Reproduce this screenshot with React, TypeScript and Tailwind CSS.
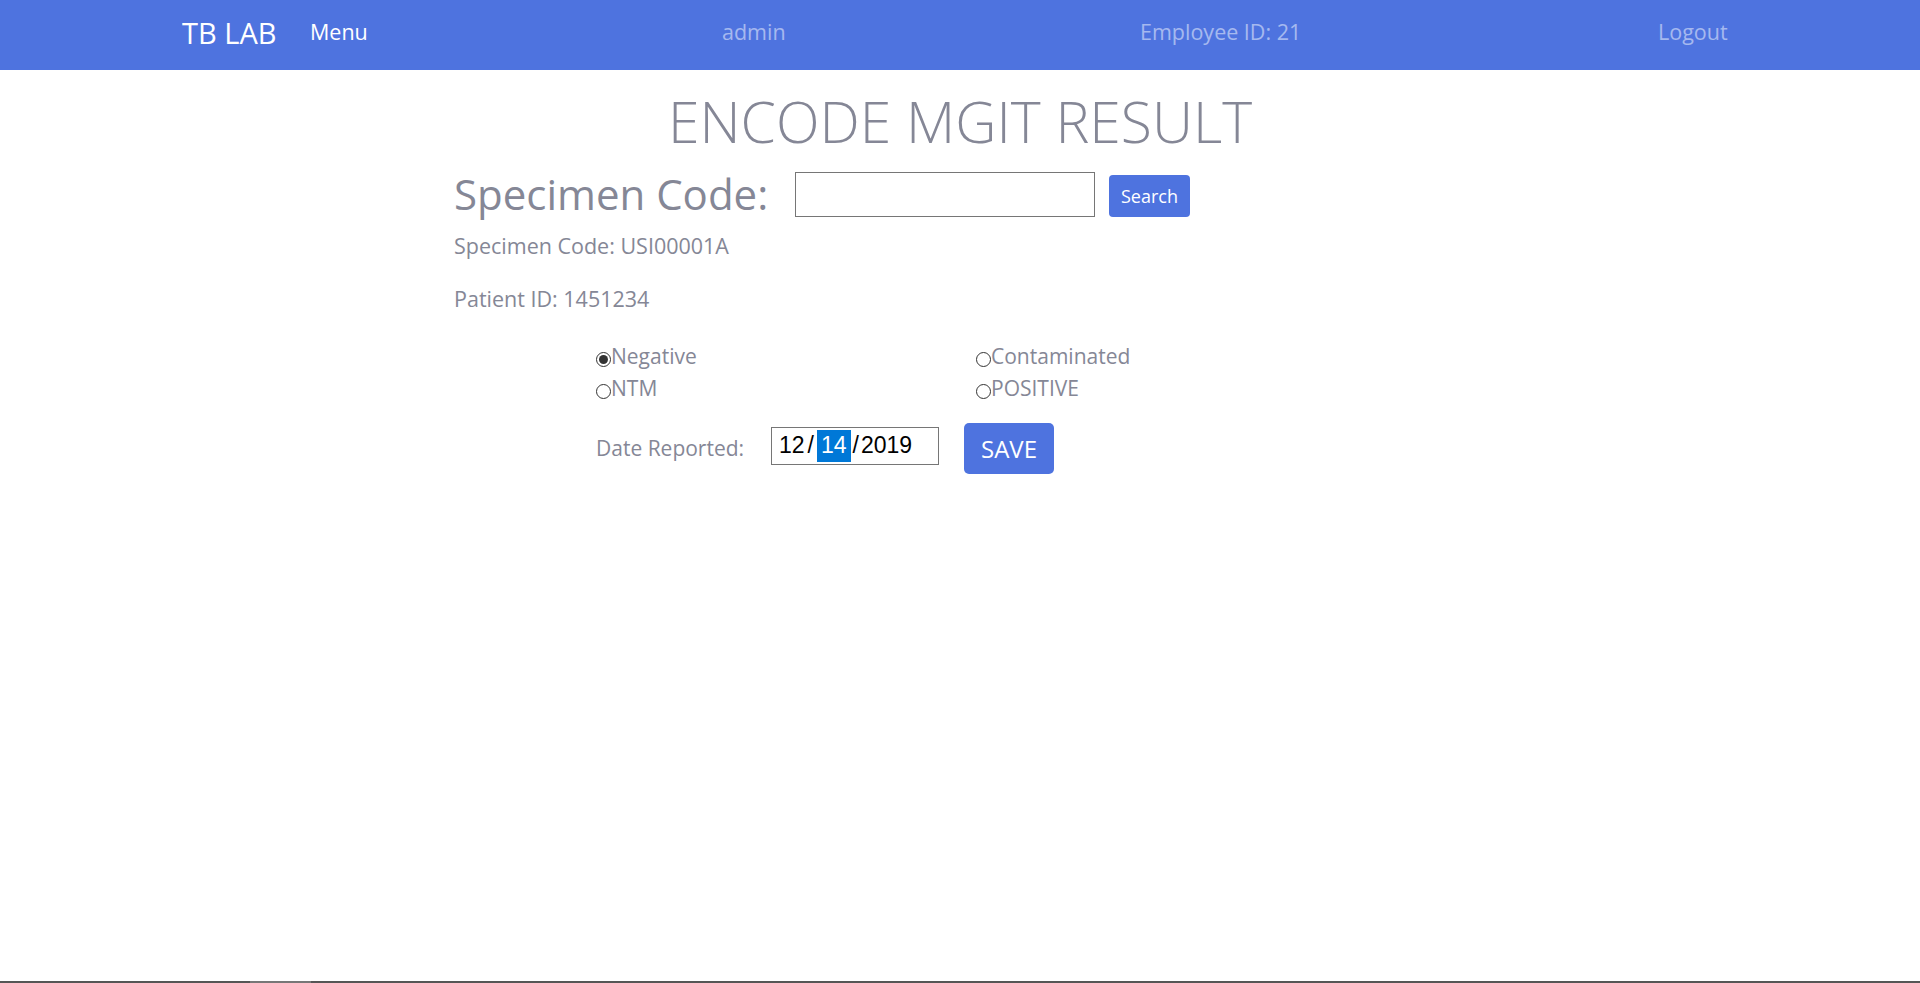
export default function App() {
  return (
    <div className="min-h-screen bg-white font-['Open_Sans','Noto_Sans',sans-serif] text-[#858796]">
      {/* top bar */}
      <nav className="flex h-[70px] items-center bg-[#4e73df] pb-[6px] pl-[182px]">
        <div className="w-[128px] text-[29px] leading-none text-white">TB LAB</div>
        <div className="w-[412px] text-[21.5px] leading-none text-white">Menu</div>
        <div className="w-[418px] text-[21.5px] leading-none text-white/50">admin</div>
        <div className="w-[518px] text-[21.5px] leading-none text-white/50">Employee ID: 21</div>
        <div className="text-[21.5px] leading-none text-white/50">Logout</div>
      </nav>

      <main>
        <h1 className="mt-[15px] text-center text-[57px] font-light leading-[72px]">ENCODE MGIT RESULT</h1>

        <section className="pl-[454px]">
          <div className="mt-[12px] flex items-center">
            <h2 className="w-[341px] text-[42px] leading-[50px]">Specimen Code:</h2>
            <input
              type="text"
              className="h-[45px] w-[300px] border border-[#767676] bg-white px-2 outline-none"
            />
            <button className="ml-[14px] mt-[4px] h-[42px] w-[81px] rounded-[4px] bg-[#4e73df] text-[18px] text-white">
              Search
            </button>
          </div>

          <p className="mt-[12px] text-[21.5px] leading-[30px]">Specimen Code: USI00001A</p>
          <p className="mt-[23px] text-[21.5px] leading-[30px]">Patient ID: 1451234</p>

          <div className="mt-[27px] pl-[142px]">
            <div className="grid w-[760px] grid-cols-2">
              <Radio label="Negative" checked />
              <Radio label="Contaminated" />
              <Radio label="NTM" />
              <Radio label="POSITIVE" />
            </div>

            <div className="mt-[18px] flex items-center">
              <span className="w-[175px] text-[21px]">Date Reported:</span>
              <div className="mb-[6px] flex h-[38px] w-[168px] items-center border border-[#767676] pl-[7px] font-['Liberation_Sans',sans-serif] text-[23px] text-black">
                <span>12</span>
                <span className="px-[3px]">/</span>
                <span className="flex h-[32px] items-center bg-[#0078d7] px-[4px] text-white">14</span>
                <span className="px-[2px]">/</span>
                <span>2019</span>
              </div>
              <button className="ml-[25px] h-[51px] w-[90px] rounded-[5px] bg-[#4e73df] text-[24px] text-white">
                SAVE
              </button>
            </div>
          </div>
        </section>
      </main>

      {/* scrollbar edge */}
      <div className="fixed inset-x-0 bottom-0 flex h-[2px] bg-[#555555]">
        <div className="ml-[250px] w-[61px] bg-[#777777]" />
      </div>
    </div>
  );
}

function Radio({ label, checked = false }: { label: string; checked?: boolean }) {
  return (
    <label className="flex h-[32px] items-center text-[21px]">
      <span className="mt-[4px] grid h-[15px] w-[15px] place-items-center rounded-full border border-[#333333] bg-white">
        {checked && <span className="h-[9px] w-[9px] rounded-full bg-[#333333]" />}
      </span>
      <span>{label}</span>
    </label>
  );
}
